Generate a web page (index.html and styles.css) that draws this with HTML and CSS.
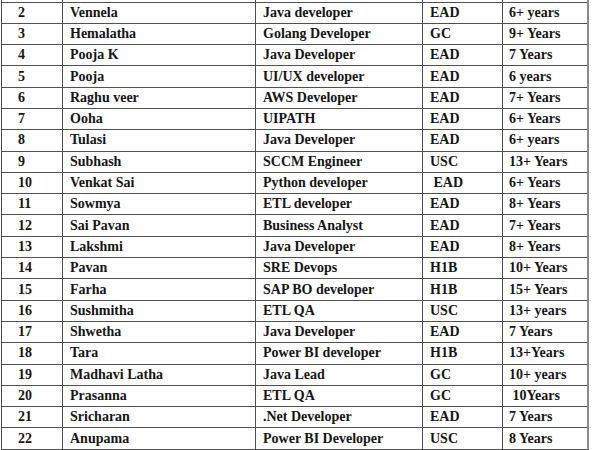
FILE: index.html
```html
<!DOCTYPE html>
<html>
<head>
<meta charset="utf-8">
<link rel="stylesheet" href="styles.css">
</head>
<body>
<table class="roster">
  <colgroup>
    <col class="c-num"><col class="c-name"><col class="c-role"><col class="c-visa"><col class="c-exp">
  </colgroup>
  <tr class="cut"><td></td><td></td><td></td><td></td><td></td></tr>
  <tr><td>2</td><td>Vennela</td><td>Java developer</td><td>EAD</td><td>6+ years</td></tr>
  <tr><td>3</td><td>Hemalatha</td><td>Golang Developer</td><td>GC</td><td>9+ Years</td></tr>
  <tr><td>4</td><td>Pooja K</td><td>Java Developer</td><td>EAD</td><td>7 Years</td></tr>
  <tr><td>5</td><td>Pooja</td><td>UI/UX developer</td><td>EAD</td><td>6 years</td></tr>
  <tr><td>6</td><td>Raghu veer</td><td>AWS Developer</td><td>EAD</td><td>7+ Years</td></tr>
  <tr><td>7</td><td>Ooha</td><td>UIPATH</td><td>EAD</td><td>6+ Years</td></tr>
  <tr><td>8</td><td>Tulasi</td><td>Java Developer</td><td>EAD</td><td>6+ years</td></tr>
  <tr><td>9</td><td>Subhash</td><td>SCCM Engineer</td><td>USC</td><td>13+ Years</td></tr>
  <tr><td>10</td><td>Venkat Sai</td><td>Python developer</td><td class="sp">&nbsp;EAD</td><td>6+ Years</td></tr>
  <tr><td>11</td><td>Sowmya</td><td>ETL developer</td><td>EAD</td><td>8+ Years</td></tr>
  <tr><td>12</td><td>Sai Pavan</td><td>Business Analyst</td><td>EAD</td><td>7+ Years</td></tr>
  <tr><td>13</td><td>Lakshmi</td><td>Java Developer</td><td>EAD</td><td>8+ Years</td></tr>
  <tr><td>14</td><td>Pavan</td><td>SRE Devops</td><td>H1B</td><td>10+ Years</td></tr>
  <tr><td>15</td><td>Farha</td><td>SAP BO developer</td><td>H1B</td><td>15+ Years</td></tr>
  <tr><td>16</td><td>Sushmitha</td><td>ETL QA</td><td>USC</td><td>13+ years</td></tr>
  <tr><td>17</td><td>Shwetha</td><td>Java Developer</td><td>EAD</td><td>7 Years</td></tr>
  <tr><td>18</td><td>Tara</td><td>Power BI developer</td><td>H1B</td><td>13+Years</td></tr>
  <tr><td>19</td><td>Madhavi Latha</td><td>Java Lead</td><td>GC</td><td>10+ years</td></tr>
  <tr><td>20</td><td>Prasanna</td><td>ETL QA</td><td>GC</td><td>&nbsp;10Years</td></tr>
  <tr><td>21</td><td>Sricharan</td><td>.Net Developer</td><td>EAD</td><td>7 Years</td></tr>
  <tr><td>22</td><td>Anupama</td><td>Power BI Developer</td><td>USC</td><td>8 Years</td></tr>
</table>
</body>
</html>
```
FILE: styles.css
```css
html, body {
  margin: 0;
  padding: 0;
  background: #ffffff;
}
body {
  overflow: hidden;
}
.roster {
  margin-left: 1px;
  border-collapse: collapse;
  table-layout: fixed;
  width: 586px;
  font-family: "Liberation Serif", serif;
  font-weight: bold;
  font-size: 14px;
  color: #151515;
}
.c-num { width: 61px; }
.c-name { width: 193px; }
.c-role { width: 167px; }
.c-visa { width: 80px; }
.c-exp { width: 85px; }
.roster td {
  border: 1px solid #505050;
  height: 21.3px;
  padding: 0 0 0 7px;
  vertical-align: middle;
  white-space: nowrap;
  line-height: 16px;
  box-sizing: border-box;
}
.roster td:first-child {
  padding-left: 16px;
}
.roster td:last-child {
  padding-left: 6px;
  border-right: 2px solid #8a8a8a;
}
.roster tr.cut td {
  height: 2px;
  line-height: 0;
  padding: 0;
  border-top: none;
}
```
